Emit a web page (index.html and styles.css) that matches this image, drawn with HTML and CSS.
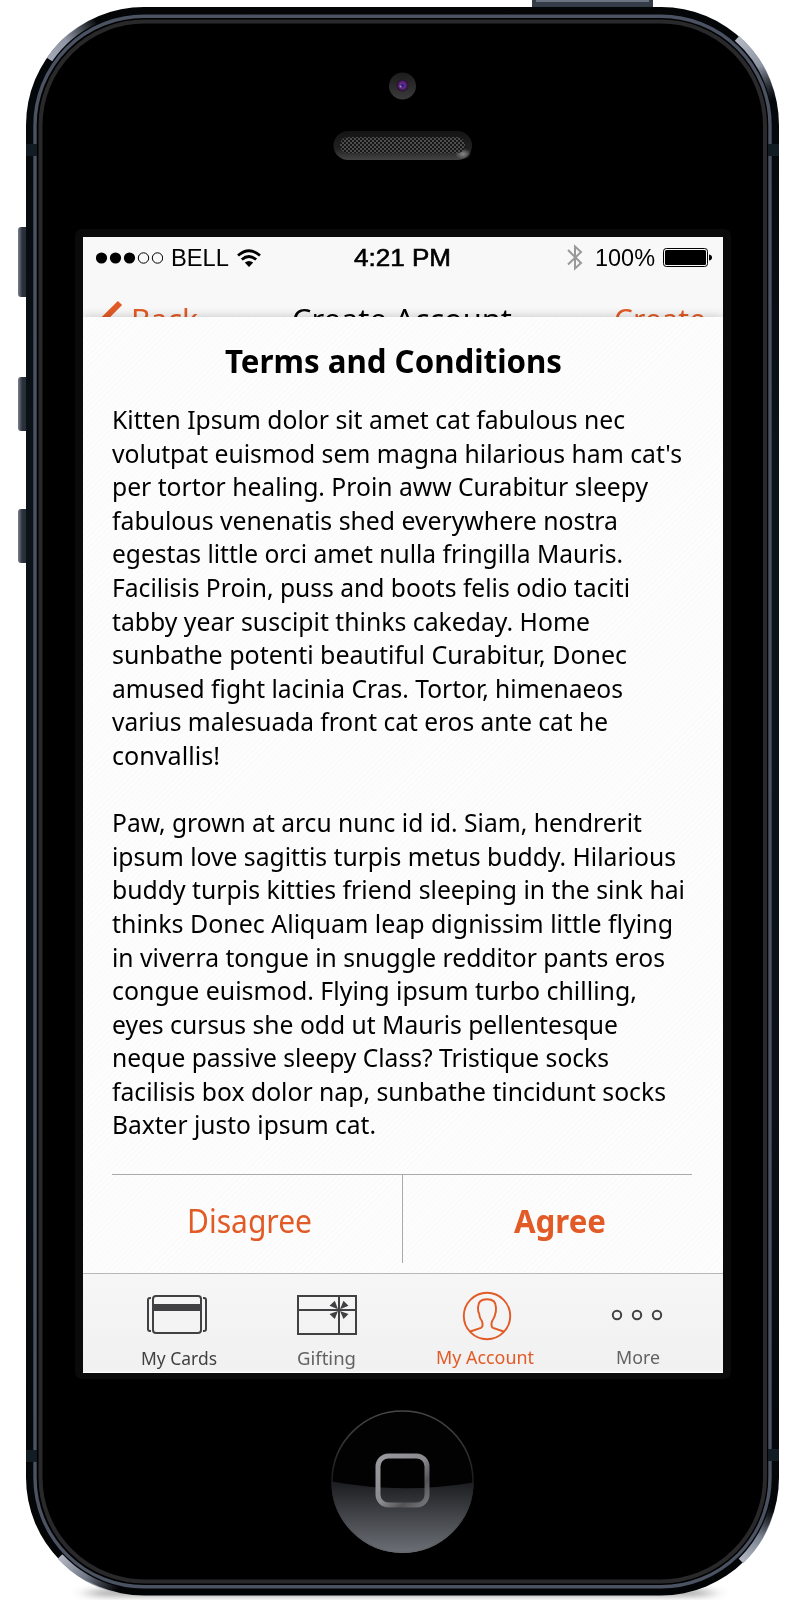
FILE: index.html
```html
<!DOCTYPE html>
<html lang="en">
<head>
<meta charset="utf-8">
<title>Terms and Conditions</title>
<link rel="stylesheet" href="styles.css">
</head>
<body>
<div class="stage">
<svg class="device" width="800" height="1600" viewBox="0 0 800 1600" aria-hidden="true">
  <defs>
    <linearGradient id="btn" x1="0" x2="1"><stop offset="0" stop-color="#79818f"/><stop offset=".3" stop-color="#2c323c"/><stop offset="1" stop-color="#20252d"/></linearGradient>
    <linearGradient id="edge" x1="0" y1="0" x2="0" y2="1"><stop offset="0" stop-color="#030507"/><stop offset=".3" stop-color="#0b1319"/><stop offset=".7" stop-color="#0a1015"/><stop offset="1" stop-color="#020304"/></linearGradient>
    <linearGradient id="tl" gradientUnits="userSpaceOnUse" x1="49" y1="59" x2="97" y2="20"><stop offset="0" stop-color="#a3a9b7"/><stop offset=".4" stop-color="#8f95a4"/><stop offset="1" stop-color="#8f95a4" stop-opacity="0"/></linearGradient>
    <linearGradient id="tr" gradientUnits="userSpaceOnUse" x1="737" y1="38" x2="773" y2="99"><stop offset="0" stop-color="#b3b8c4"/><stop offset=".5" stop-color="#8e95a3"/><stop offset="1" stop-color="#59606e" stop-opacity="0"/></linearGradient>
    <linearGradient id="bl" gradientUnits="userSpaceOnUse" x1="60" y1="1556" x2="118" y2="1590"><stop offset="0" stop-color="#b3b8c4"/><stop offset=".5" stop-color="#6f7684"/><stop offset="1" stop-color="#59606e" stop-opacity="0"/></linearGradient>
    <linearGradient id="br" gradientUnits="userSpaceOnUse" x1="741" y1="1561" x2="772" y2="1508"><stop offset="0" stop-color="#b3b8c4"/><stop offset=".5" stop-color="#7a818f"/><stop offset="1" stop-color="#59606e" stop-opacity="0"/></linearGradient>
    <linearGradient id="slot" x1="0" y1="0" x2="0" y2="1"><stop offset="0" stop-color="#141414"/><stop offset=".6" stop-color="#202020"/><stop offset="1" stop-color="#444"/></linearGradient>
    <radialGradient id="glint"><stop offset="0" stop-color="#888"/><stop offset="1" stop-color="#888" stop-opacity="0"/></radialGradient>
    <linearGradient id="cam" x1="0" y1="0" x2="0" y2="1"><stop offset="0" stop-color="#1c1c1c"/><stop offset="1" stop-color="#3c3a3c"/></linearGradient>
    <radialGradient id="lens"><stop offset="0" stop-color="#12206e"/><stop offset=".45" stop-color="#6c2a90"/><stop offset="1" stop-color="#1d1022"/></radialGradient>
    <linearGradient id="gloss" x1="0" y1="0" x2="0" y2="1"><stop offset="0" stop-color="#1b1c20"/><stop offset="1" stop-color="#6c7076"/></linearGradient>
    <linearGradient id="ring" x1="0" y1="0" x2="0" y2="1"><stop offset="0" stop-color="#484848"/><stop offset=".5" stop-color="#1c1c1e"/><stop offset="1" stop-color="#66696e"/></linearGradient>
    <linearGradient id="sq" x1="0" y1="0" x2="1" y2="1"><stop offset="0" stop-color="#9a9a9e"/><stop offset=".5" stop-color="#8a8a8f"/><stop offset=".75" stop-color="#525257"/><stop offset="1" stop-color="#77787c"/></linearGradient>
    <pattern id="mesh" width="4" height="4" patternUnits="userSpaceOnUse"><rect width="4" height="4" fill="#161616"/><rect width="2" height="2" fill="#4d4d4d"/><rect x="2" y="2" width="2" height="2" fill="#4d4d4d"/></pattern>
    <filter id="soft" x="-10%" y="-200%" width="120%" height="500%"><feGaussianBlur stdDeviation="10 3"/></filter>
  </defs>
  <rect x="90" y="1590" width="620" height="6" rx="3" fill="#000" opacity=".4" filter="url(#soft)"/>
  <rect x="532" y="-10" width="121" height="20" rx="3" fill="#343c48"/>
  <rect x="536" y="-4" width="113" height="6" fill="#697382"/>
  <rect x="18" y="227" width="14" height="70" rx="3" fill="url(#btn)"/>
  <rect x="18" y="377" width="14" height="54" rx="3" fill="url(#btn)"/>
  <rect x="18" y="509" width="14" height="54" rx="3" fill="url(#btn)"/>
  <rect x="26" y="7" width="753" height="1588.5" rx="118" fill="url(#edge)"/>
  <g fill="none" stroke-width="6.5">
    <path d="M49.5 59.5A115 115 0 0 1 95 20.9" stroke="url(#tl)"/>
    <path d="M737 38.4A115 115 0 0 1 773 99" stroke="url(#tr)"/>
    <path d="M60 1556.5A115 115 0 0 0 118 1590" stroke="url(#bl)"/>
    <path d="M741 1561A115 115 0 0 0 772 1508" stroke="url(#br)"/>
  </g>
  <rect x="35" y="16.300" width="735" height="1570.500" rx="109" fill="#000" stroke="#4b5262" stroke-width="3.400"/>
  <rect x="40.500" y="21.500" width="724.500" height="1560" rx="104" fill="none" stroke="#29292b" stroke-width="4"/>
  <g fill="#121d23"><path d="M26 144h11v12H26zM768 144h11v12h-11zM26 1450h11v12H26zM768 1449h11v12h-11z"/></g>
  <circle cx="402.500" cy="86" r="13.500" fill="url(#cam)"/>
  <circle cx="402.500" cy="85.500" r="6" fill="url(#lens)"/>
  <circle cx="400.500" cy="86.500" r="1" fill="#a48ac0"/>
  <rect x="333.500" y="131" width="138.500" height="29" rx="14.500" fill="url(#slot)"/>
  <ellipse cx="463" cy="154" rx="8" ry="5.500" fill="url(#glint)"/>
  <rect x="340" y="137" width="125" height="16" rx="8" fill="url(#mesh)"/>
  <rect x="75" y="229" width="656" height="1150" rx="7" fill="#0a0a0a"/>
  <circle cx="402.500" cy="1481.500" r="71" fill="#020202"/>
  <path d="M331.500 1481.500Q402.500 1494.500 473.500 1482.500A71 71 0 0 1 331.500 1481.500z" fill="url(#gloss)"/>
  <circle cx="402.500" cy="1481.500" r="70.500" fill="none" stroke="url(#ring)" stroke-width="1.500"/>
  <rect x="378" y="1456" width="49" height="49" rx="10.500" fill="none" stroke="url(#sq)" stroke-width="5"/>
</svg>

<main class="screen">
  <header class="status">
    <div class="carrier">
      <svg width="67" height="12" viewBox="0 0 67 12"><circle cx="5.500" cy="6" r="5.600"/><circle cx="19.500" cy="6" r="5.600"/><circle cx="33.500" cy="6" r="5.600"/><g fill="none" stroke="#000"><circle cx="47.500" cy="6" r="5.200"/><circle cx="61.500" cy="6" r="5.200"/></g></svg>
      <span class="fit bell" data-w="58">BELL</span>
      <svg class="wifi" width="24" height="18" viewBox="0 0 24 18"><g fill="none" stroke="#000" stroke-width="2.700"><path d="M1 6.500Q12-3 23 6.500"/><path d="M4.800 10.500Q12 4.500 19.200 10.500"/></g><path d="M12 18L7.800 13.600Q12 10.600 16.200 13.600z"/></svg>
    </div>
    <span class="fit time" data-w="97">4:21 PM</span>
    <div class="power">
      <svg width="16" height="27" viewBox="0 0 16 27"><path d="M1 6L14 19L8 24.500V2.500L14 8L1 20.500" fill="none" stroke="#999" stroke-width="2"/></svg>
      <span class="fit percent" data-w="60">100%</span>
      <svg class="battery" width="49" height="19" viewBox="0 0 49 19"><rect x=".5" y=".5" width="44" height="18" rx="2.800" fill="none" stroke="#000"/><rect x="2" y="2" width="41" height="15" rx="1.500"/><path d="M46 6.500q3 .5 3 3t-3 3z"/></svg>
    </div>
  </header>
  <nav class="navbar">
    <div class="back">
      <svg width="24" height="43" viewBox="0 0 24 43"><path d="M21 8L3.500 25.500L21 43" fill="none" stroke="#e25a26" stroke-width="6"/></svg>
      <span class="fit" data-w="67">Back</span>
    </div>
    <span class="fit heading" data-w="220">Create Account</span>
    <span class="fit" data-w="92">Create</span>
  </nav>
  <section class="sheet">
    <h1><span class="fit" data-w="337">Terms and Conditions</span></h1>
    <p>
      <span class="fit" data-w="513">Kitten Ipsum dolor sit amet cat fabulous nec</span>
      <span class="fit" data-w="570">volutpat euismod sem magna hilarious ham cat's</span>
      <span class="fit" data-w="536">per tortor healing. Proin aww Curabitur sleepy</span>
      <span class="fit" data-w="506">fabulous venenatis shed everywhere nostra</span>
      <span class="fit" data-w="511">egestas little orci amet nulla fringilla Mauris.</span>
      <span class="fit" data-w="518">Facilisis Proin, puss and boots felis odio taciti</span>
      <span class="fit" data-w="478">tabby year suscipit thinks cakeday. Home</span>
      <span class="fit" data-w="515">sunbathe potenti beautiful Curabitur, Donec</span>
      <span class="fit" data-w="511">amused fight lacinia Cras. Tortor, himenaeos</span>
      <span class="fit" data-w="496">varius malesuada front cat eros ante cat he</span>
      <span class="fit" data-w="108">convallis!</span>
    </p>
    <p>
      <span class="fit" data-w="530">Paw, grown at arcu nunc id id. Siam, hendrerit</span>
      <span class="fit" data-w="564">ipsum love sagittis turpis metus buddy. Hilarious</span>
      <span class="fit" data-w="573">buddy turpis kitties friend sleeping in the sink hai</span>
      <span class="fit" data-w="561">thinks Donec Aliquam leap dignissim little flying</span>
      <span class="fit" data-w="553">in viverra tongue in snuggle redditor pants eros</span>
      <span class="fit" data-w="525">congue euismod. Flying ipsum turbo chilling,</span>
      <span class="fit" data-w="506">eyes cursus she odd ut Mauris pellentesque</span>
      <span class="fit" data-w="497">neque passive sleepy Class? Tristique socks</span>
      <span class="fit" data-w="554">facilisis box dolor nap, sunbathe tincidunt socks</span>
      <span class="fit" data-w="264">Baxter justo ipsum cat.</span>
    </p>
    <div class="actions">
      <div class="action"><span class="fit" data-w="125">Disagree</span></div>
      <div class="action agree"><span class="fit" data-w="92">Agree</span></div>
    </div>
  </section>
  <footer class="tabs">
    <div class="tab dark">
      <svg width="100" height="72" viewBox="0 0 100 72" fill="none" stroke="#414143" stroke-width="2"><rect x="24" y="22" width="48" height="37" rx="3"/><path d="M24 33.500h48" stroke-width="7"/><path d="M22 24h-1a2 2 0 0 0-2 2v29a2 2 0 0 0 2 2h1M74 24h1a2 2 0 0 1 2 2v29a2 2 0 0 1-2 2h-1"/></svg>
      <span class="fit" data-w="76">My Cards</span>
    </div>
    <div class="tab">
      <svg width="100" height="72" viewBox="0 0 100 72" fill="none" stroke="#414143" stroke-width="2"><path d="M21 22h58v38h-58zM21 36h58M62 22v38"/><path d="M61 35.200L52.500 31.800L57.800 26.800zM63 35.200L66.500 26.800L71.500 31.800zM61 37L52.500 40L57.800 45zM63 37L71.500 40L66.500 45z" fill="#414143" stroke="none"/></svg>
      <span class="fit" data-w="59">Gifting</span>
    </div>
    <div class="tab active">
      <svg width="100" height="72" viewBox="0 0 100 72" fill="none" stroke="#e25a26" stroke-width="1.900"><circle cx="52" cy="42" r="23.200"/><path d="M35.300 57.500L46 53.800Q48 53 47.500 49.500Q47.300 47 45.400 44.500Q44.400 43 44.300 40Q42.800 38 43 33.500C43 27.500 46 25.200 52 25.200S61 27.500 61 33.500Q61.200 38 60.200 40Q59.600 43 58.600 44.500Q56.700 47 56.500 49.500Q56.200 53 58 53.800L68.700 57.500"/></svg>
      <span class="fit" data-w="98">My Account</span>
    </div>
    <div class="tab more">
      <svg width="100" height="72" viewBox="0 0 100 72" fill="none" stroke="#414143" stroke-width="2"><circle cx="29" cy="41" r="4.200"/><circle cx="49" cy="41" r="4.200"/><circle cx="69" cy="41" r="4.200"/></svg>
      <span class="fit" data-w="44">More</span>
    </div>
  </footer>
</main>
</div>
<script src="fit.js"></script>
</body>
</html>
```
FILE: styles.css
```css
* { box-sizing: border-box; }
body { margin: 0; background: #fff; font-family: "Noto Sans", "Open Sans", sans-serif; color: #000; }
.stage { position: relative; width: 800px; height: 1600px; overflow: hidden; padding: 237px 0 0 83px; }
.device { position: absolute; left: 0; top: 0; }
.screen { position: relative; width: 640px; height: 1136px; display: flex; flex-direction: column; overflow: hidden; background: #f8f8f8; }
.fit { display: inline-block; white-space: nowrap; transform-origin: 0 50%; }

.status { flex: none; display: grid; grid-template-columns: 1fr auto 1fr; height: 41px; align-items: center; padding: 0 11px 0 13px; font-family: "Liberation Sans", Arial, sans-serif; font-size: 23.500px; line-height: 27px; }
.status .fit { padding-top: 2px; }
.carrier, .power { display: flex; align-items: center; }
.bell { margin-left: 8px; }
.wifi { margin-left: 8px; }
.time { margin-left: -4px; -webkit-text-stroke: .6px #000; }
.power { justify-content: flex-end; }
.percent { margin-left: 12px; }
.battery { margin-left: 8px; }

.navbar { flex: none; display: grid; grid-template-columns: 193px 1fr auto; height: 39px; padding: 17px 17px 0 16px; font-size: 29px; line-height: 47px; color: #e25a26; overflow: hidden; }
.back { display: flex; gap: 8px; height: 47px; }
.heading { color: #000; justify-self: start; }

.sheet { position: relative; flex: 1; display: flex; flex-direction: column; padding: 24px 29px 10px 29px; background: repeating-linear-gradient(135deg, #fdfdfd 0 2px, #fbfbfb 2px 4px); box-shadow: 0 -1px 9px rgba(0, 0, 0, .18); }
h1 { margin: 0 0 22px; font-size: 32px; line-height: 40px; text-align: center; padding-right: 19px; }
p { display: flex; flex-direction: column; align-items: flex-start; margin: 0 0 33.600px; font-size: 26px; line-height: 33.600px; }
p + p { margin-bottom: 0; }
.actions { flex: none; display: grid; grid-template-columns: 290px 290px; height: 89px; margin-top: auto; border-top: 1px solid #aaa; margin-right: 2px; font-size: 32px; line-height: 40px; color: #e25a26; }
.action { padding: 26px 15px 0 0; text-align: center; }
.agree { margin-right: 2px; border-left: 1px solid #aaa; padding: 26px 0 0 27px; font-weight: 700; }

.tabs { flex: none; position: relative; display: grid; grid-template-columns: 148px 147px 170px 136px; padding-left: 22px; height: 100px; border-top: 1px solid #b4b8b6; border-bottom: 1px solid #fff; background: linear-gradient(#f6f6f6, #f1f1f1); font-size: 18px; line-height: 24px; color: #626264; }
.tab { display: flex; flex-direction: column; align-items: center; }
.dark { color: #414143; }
.active { color: #e25a26; }
.active .fit, .more .fit { margin-top: -1px; }
```
FILE: fit.js
```js
// Condense each text run horizontally to its design width.
document.querySelectorAll(".fit").forEach(function (el) {
  var target = Number(el.dataset.w);
  var natural = el.getBoundingClientRect().width;
  el.style.transform = "scaleX(" + target / natural + ")";
  el.style.marginRight = target - natural + "px";
});
```
